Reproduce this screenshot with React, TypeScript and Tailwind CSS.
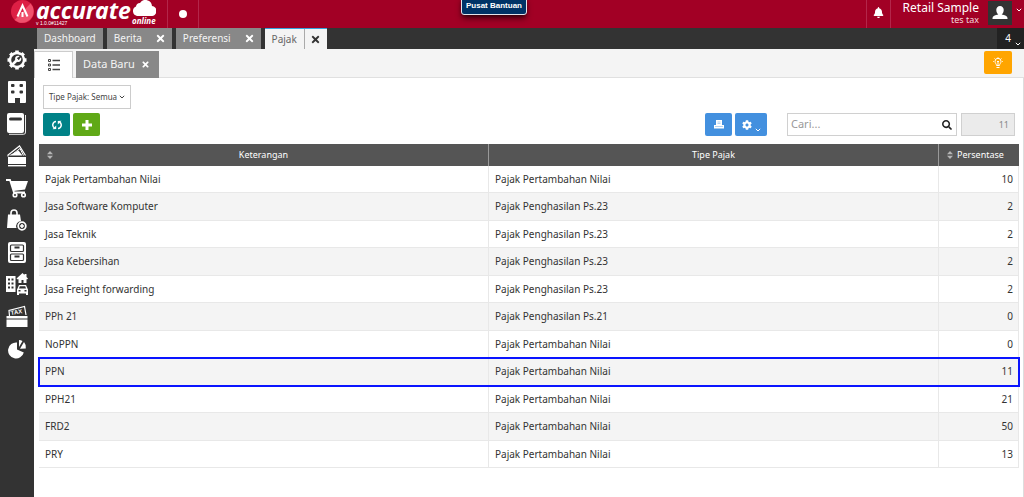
import React from 'react';
import { clsx } from 'clsx';
import { FaBell, FaCog, FaPlus, FaSearch, FaTimes } from 'react-icons/fa';

interface TaxRow {
  name: string;
  type: string;
  rate: number;
  highlighted?: boolean;
}

const TAXES: TaxRow[] = [
  { name: 'Pajak Pertambahan Nilai', type: 'Pajak Pertambahan Nilai', rate: 10 },
  { name: 'Jasa Software Komputer', type: 'Pajak Penghasilan Ps.23', rate: 2 },
  { name: 'Jasa Teknik', type: 'Pajak Penghasilan Ps.23', rate: 2 },
  { name: 'Jasa Kebersihan', type: 'Pajak Penghasilan Ps.23', rate: 2 },
  { name: 'Jasa Freight forwarding', type: 'Pajak Penghasilan Ps.23', rate: 2 },
  { name: 'PPh 21', type: 'Pajak Penghasilan Ps.21', rate: 0 },
  { name: 'NoPPN', type: 'Pajak Pertambahan Nilai', rate: 0 },
  { name: 'PPN', type: 'Pajak Pertambahan Nilai', rate: 11, highlighted: true },
  { name: 'PPH21', type: 'Pajak Pertambahan Nilai', rate: 21 },
  { name: 'FRD2', type: 'Pajak Pertambahan Nilai', rate: 50 },
  { name: 'PRY', type: 'Pajak Pertambahan Nilai', rate: 13 },
];

const MENU: { label: string; icon: React.ReactNode }[] = [
  {
    label: 'Pengaturan',
    icon: (
      <>
        <circle cx="11" cy="11" r="7" fill="none" stroke="currentColor" strokeWidth="2.4" />
        <path
          d="M11 1.5v3M11 17.5v3M1.5 11h3M17.5 11h3M4.3 4.3l2 2M15.7 15.7l2 2M4.3 17.7l2-2M15.7 6.3l2-2"
          stroke="currentColor"
          strokeWidth="3.6"
        />
        <path d="M7 15l4-4" stroke="currentColor" strokeWidth="2.6" strokeLinecap="round" />
        <circle cx="12.2" cy="9.8" r="2.2" fill="none" stroke="currentColor" strokeWidth="1.8" />
        <path d="M12.4 9.6l3-3" stroke="#333" strokeWidth="1.8" />
      </>
    ),
  },
  {
    label: 'Perusahaan',
    icon: (
      <path
        fill="currentColor"
        fillRule="evenodd"
        d="M3 0h16a1 1 0 0 1 1 1v20a1 1 0 0 1-1 1h-5v-5H9v5H3a1 1 0 0 1-1-1V1a1 1 0 0 1 1-1zM6 3a1 1 0 0 0-1 1v1a1 1 0 0 0 1 1h1.5a1 1 0 0 0 1-1V4a1 1 0 0 0-1-1zM14.5 3a1 1 0 0 0-1 1v1a1 1 0 0 0 1 1H16a1 1 0 0 0 1-1V4a1 1 0 0 0-1-1zM6 9.500a1 1 0 0 0-1 1v1a1 1 0 0 0 1 1h1.5a1 1 0 0 0 1-1v-1a1 1 0 0 0-1-1zM14.5 9.500a1 1 0 0 0-1 1v1a1 1 0 0 0 1 1H16a1 1 0 0 0 1-1v-1a1 1 0 0 0-1-1z"
      />
    ),
  },
  {
    label: 'Buku Besar',
    icon: (
      <>
        <path
          fill="currentColor"
          fillRule="evenodd"
          d="M3 0h13a2 2 0 0 1 2 2v16a2 2 0 0 1-2 2H3a2 2 0 0 1-2-2V2a2 2 0 0 1 2-2zM4.5 4.5a1.2 1.2 0 0 0 0 3h10a1.2 1.2 0 0 0 0-3z"
        />
        <path d="M19.5 2v17a2 2 0 0 1-2 2.300H3" fill="none" stroke="currentColor" strokeWidth=".9" />
      </>
    ),
  },
  {
    label: 'Kas & Bank',
    icon: (
      <>
        <rect x="2" y="12" width="18" height="7" fill="currentColor" />
        <path d="M2 11.5V10L13.5 1l6 9.500" fill="none" stroke="currentColor" strokeWidth="1.2" />
        <path d="M3 10.500l9.500-5 4 5z" fill="currentColor" />
        <path d="M7.5 8.500L14 3.500l3.500 7" fill="none" stroke="currentColor" />
        <rect x="2" y="20" width="18" height="1.4" fill="currentColor" />
      </>
    ),
  },
  {
    label: 'Penjualan',
    icon: (
      <>
        <path d="M0 3h4l4 12.500h11" fill="none" stroke="currentColor" strokeWidth="1.8" />
        <path fill="currentColor" d="M4.5 4H22l-3 8.500L7.5 14z" />
        <circle cx="9" cy="18" r="1.8" fill="none" stroke="currentColor" strokeWidth="1.6" />
        <circle cx="17.5" cy="18" r="1.8" fill="none" stroke="currentColor" strokeWidth="1.6" />
      </>
    ),
  },
  {
    label: 'Pembelian',
    icon: (
      <>
        <path d="M5 6V4a3 3 0 0 1 6 0v2" fill="none" stroke="currentColor" strokeWidth="1.6" />
        <path fill="currentColor" d="M2 5.500h12l1 6.500a5.200 5.200 0 0 0-4.500 7H1z" />
        <circle cx="16" cy="17" r="3.8" fill="none" stroke="currentColor" strokeWidth="1.8" />
        <path d="M16 15v4M14 17h4" stroke="currentColor" strokeWidth="1.6" />
      </>
    ),
  },
  {
    label: 'Persediaan',
    icon: (
      <>
        <rect x="2" y="1" width="18" height="21" rx="2" fill="currentColor" />
        <rect x="4.5" y="4" width="13" height="6.5" rx="1" fill="none" stroke="#333" strokeWidth="1.2" />
        <rect x="4.5" y="13" width="13" height="6.5" rx="1" fill="none" stroke="#333" strokeWidth="1.2" />
        <path d="M8.5 6.500h5M8.5 15.500h5" stroke="#333" strokeWidth="1.8" />
      </>
    ),
  },
  {
    label: 'Aset Tetap',
    icon: (
      <>
        <path
          fill="currentColor"
          fillRule="evenodd"
          d="M0 3h9.500v16H0zM2 5.500v2h2v-2zM5.500 5.500v2h2v-2zM2 9.500v2h2v-2zM5.500 9.500v2h2v-2zM2 13.500v2h2v-2zM5.500 13.500v2h2v-2z"
        />
        <path fill="currentColor" d="M10.500 5.500L16.500 0l2 2V1h2v3l1.500 1.500-.7.700H20.500V10h-3V7h-2v3h-3V6.200h-1.300z" />
        <path
          fill="currentColor"
          fillRule="evenodd"
          d="M13 12h7l1.500 3.500.5 1V22h-2v-1.500h-7V22h-2v-5.500l.5-1zM13.800 13.200l-.8 2.300h7l-.8-2.300zM12.500 17v1.500h2V17zM18.500 17v1.500h2V17z"
        />
      </>
    ),
  },
  {
    label: 'Perpajakan',
    icon: (
      <>
        <path d="M3.500 11L3 5.500l15.500-4L20 10" fill="none" stroke="currentColor" strokeWidth="1.2" />
        <text
          x="5"
          y="10"
          fontSize="6"
          fontWeight="700"
          fill="currentColor"
          transform="rotate(-9 5 10)"
          className="font-['Liberation_Sans',sans-serif]"
        >
          TAX
        </text>
        <path fill="currentColor" d="M.5 11h21v2.500H.5zM.5 14.500h21V22H.5z" />
      </>
    ),
  },
  {
    label: 'Laporan',
    icon: (
      <>
        <path fill="currentColor" d="M11 5.500v7l6.800 3A8 8 0 1 1 11 5.500z" />
        <path fill="currentColor" d="M13 3a8 8 0 0 1 3.500 1L13 10zM18 5a8 8 0 0 1 1.800 6.500l-5.800.3z" />
      </>
    ),
  },
];

function Chevron({ className }: { className?: string }) {
  return (
    <svg viewBox="0 0 6 4" className={clsx('w-1.5 h-1', className)} aria-hidden="true">
      <path d="M.8.8L3 3 5.2.8" fill="none" stroke="currentColor" />
    </svg>
  );
}

function SortIcon() {
  return (
    <svg viewBox="0 0 6 8" className="w-1.5 h-2 shrink-0 text-[#b5b5b5]" aria-hidden="true">
      <path d="M3 0l3 3.300H0zM3 8l3-3.300H0z" fill="currentColor" />
    </svg>
  );
}

function Tab({ label, closable = false }: { label: string; closable?: boolean }) {
  return (
    <div className="flex items-center h-[21px] bg-[#888] text-[#f4f4f4]">
      <button type="button" className="px-[7px] text-[10px]">
        {label}
      </button>
      {closable && (
        <button type="button" aria-label={`Tutup ${label}`} className="px-1.5 text-white">
          <FaTimes size={11} />
        </button>
      )}
    </div>
  );
}

function Header() {
  return (
    <header className="relative flex h-7 bg-[#a20025] text-white">
      <div className="flex w-[168px] pl-[11px] border-r border-[#b3264a]">
        <svg viewBox="0 0 23 23" className="w-[23px] h-[23px] shrink-0" aria-hidden="true">
          <circle cx="11.5" cy="11.5" r="11.5" fill="#dd1f45" />
          <path d="M3.500 20L19.500 3.500A11.500 11.500 0 0 1 8 22.400z" fill="#f0506d" />
          <path d="M6.500 16.500L11.500 5.500L16.500 16.500M11.500 12v5" fill="none" stroke="#fff" strokeWidth="2" />
        </svg>
        <div className="flex flex-col pl-0.5">
          <span className="text-[23px] leading-5 font-bold italic">accurate</span>
          <span className="font-['Liberation_Sans',sans-serif] text-[5px] leading-[7px]">v 1.0.0#11427</span>
        </div>
        <div className="flex flex-col items-center pl-px">
          <svg viewBox="0 0 24 16" className="w-6 h-4" aria-hidden="true">
            <path d="M5 16a5 5 0 0 1-1-9.500A4 4 0 0 1 8 3a6.500 6.500 0 0 1 12 3 5 5 0 0 1-1 10z" fill="currentColor" />
          </svg>
          <span className="text-[8px] leading-[9px] font-bold italic">online</span>
        </div>
      </div>
      <div className="flex w-[31px] items-center justify-center border-r border-[#b3264a]">
        <span className="w-2 h-2 rounded-full bg-white" />
      </div>

      <button
        type="button"
        className="absolute left-[461px] -top-1 h-[19px] w-[66px] rounded-[3px] border border-[#e4e4ea] bg-[#003366] font-['Liberation_Sans',sans-serif] text-[8px] leading-[17px] font-bold shadow-md shadow-black/60"
      >
        Pusat Bantuan
      </button>

      <div className="ml-auto flex">
        <button
          type="button"
          aria-label="Notifikasi"
          className="flex w-[25px] items-center justify-center border-x border-[#b3264a] pb-1"
        >
          <FaBell size={11} />
        </button>
        <div className="flex w-[88px] flex-col items-end pt-px whitespace-nowrap">
          <span className="text-xs leading-[14px]">Retail Sample</span>
          <span className="text-[9px] leading-[9px] text-[#f3d8de]">tes tax</span>
        </div>
        <button type="button" aria-label="Akun" className="flex pt-px pl-[9px] pr-0.5">
          <span className="flex h-6 w-6 items-center justify-center bg-[#333]">
            <svg viewBox="0 0 16 14" className="w-4 h-3.5" aria-hidden="true">
              <path
                d="M8 0a3.700 3.700 0 0 1 3.700 4c0 2-1 3.700-2 4.500C13 9 15.500 10 15.500 12v1H.5v-1c0-2 2.500-3 5.800-3.500-1-.8-2-2.500-2-4.500A3.700 3.700 0 0 1 8 0z"
                fill="currentColor"
              />
            </svg>
          </span>
          <Chevron className="ml-1 mt-[7px]" />
        </button>
      </div>
    </header>
  );
}

function Sidebar() {
  return (
    <nav className="flex w-[34px] shrink-0 flex-col bg-[#333] pt-4 text-white">
      {MENU.map((item) => (
        <button
          key={item.label}
          type="button"
          aria-label={item.label}
          className="flex h-8 w-full items-center justify-center"
        >
          <svg viewBox="0 0 22 22" className="w-[22px] h-[22px]" aria-hidden="true">
            {item.icon}
          </svg>
        </button>
      ))}
    </nav>
  );
}

function TabBar() {
  return (
    <div className="flex h-[21px] bg-[#333]">
      <div className="flex gap-1 pl-[3px]">
        <Tab label="Dashboard" />
        <Tab label="Berita" closable />
        <Tab label="Preferensi" closable />
        <div className="flex h-[21px] border-t border-[#35a3dc] bg-[#f4f4f4]">
          <button type="button" className="w-10 border-r border-[#aaa] text-[10px] text-[#666]">
            Pajak
          </button>
          <button type="button" aria-label="Tutup Pajak" className="flex w-[22px] items-center justify-center text-[#333]">
            <FaTimes size={11} />
          </button>
        </div>
      </div>
      <button
        type="button"
        aria-label="Daftar tab"
        className="ml-auto flex w-[27px] items-center justify-end gap-1 bg-[#222] pr-[3px] text-[10px] text-white"
      >
        4
        <Chevron className="mt-[10px]" />
      </button>
    </div>
  );
}

function SubTabBar() {
  return (
    <div className="flex h-[29px] border-b border-[#e0e0e0] bg-[#f4f4f4] pt-0.5">
      <button
        type="button"
        aria-label="Daftar Pajak"
        className="flex h-[27px] w-[39px] items-center justify-center border-x border-t border-[#ccc] bg-white text-[#444]"
      >
        <svg viewBox="0 0 12 12" className="w-3 h-3" aria-hidden="true">
          <path d="M.5.500h2v2h-2zM.5 5h2v2h-2zM.5 9.500h2v2h-2z" fill="none" stroke="currentColor" />
          <path d="M4.500 1.500H12M4.500 6H12M4.500 10.500H12" stroke="currentColor" strokeWidth="1.5" />
        </svg>
      </button>
      <div className="ml-[3px] flex h-[27px] items-center gap-1.5 bg-[#888] px-[7px] text-[#f4f4f4]">
        <button type="button" className="text-[11px]">
          Data Baru
        </button>
        <button type="button" aria-label="Tutup Data Baru" className="pr-0.5 text-white">
          <FaTimes size={9} />
        </button>
      </div>
      <button
        type="button"
        aria-label="Tips"
        className="ml-auto mr-3 flex h-[23px] w-7 items-center justify-center rounded-[2px] bg-[#ffa500] text-white"
      >
        <svg viewBox="0 0 10 12" className="w-2.5 h-3" fill="none" stroke="currentColor" aria-hidden="true">
          <path d="M3.500 8.500C3.500 7 2 6.300 2 4.300a3 3 0 0 1 6 0c0 2-1.500 2.700-1.500 4.200zM3.500 10.500h3M5 8V5M4 4l1 1 1-1" />
          <path d="M5 0v1M0 4.500h1M9 4.500h1M1 1l.7.7M9 1l-.7.7" strokeWidth=".7" />
        </svg>
      </button>
    </div>
  );
}

function Toolbar() {
  return (
    <div className="flex items-center pl-1 pr-1">
      <button
        type="button"
        aria-label="Muat ulang"
        className="mr-[3px] flex h-[23px] w-[27px] items-center justify-center rounded-[2px] bg-[#008287] text-white"
      >
        <svg viewBox="0 0 10 10" className="w-2.5 h-2.5" aria-hidden="true">
          <path d="M4 1.500A3.500 3.500 0 0 0 2.500 8M6 8.500A3.500 3.500 0 0 0 7.500 2" fill="none" stroke="currentColor" strokeWidth="1.5" />
          <path d="M.5 9.200L4.200 9V5.600zM9.500.8L5.800 1v3.400z" fill="currentColor" />
        </svg>
      </button>
      <button
        type="button"
        aria-label="Tambah"
        className="flex h-[23px] w-[27px] items-center justify-center rounded-[2px] bg-[#60a917] text-white"
      >
        <svg viewBox="0 0 10 10" className="w-2.5 h-2.5" aria-hidden="true">
          <path d="M5 0v10M0 5h10" stroke="currentColor" strokeWidth="3" />
        </svg>
      </button>

      <button
        type="button"
        aria-label="Cetak"
        className="ml-auto mr-[3px] flex h-[23px] w-[27px] items-center justify-center rounded-[2px] bg-[#4390df] text-white"
      >
        <svg viewBox="0 0 10 9" className="w-2.5 h-[9px]" aria-hidden="true">
          <path d="M2 0h6v5h2v3.500H0V5h2z" fill="currentColor" />
          <path d="M3.500 2h3M3.500 3.500h3M1 6.500h8" stroke="#4390df" strokeWidth=".4" />
        </svg>
      </button>
      <button
        type="button"
        aria-label="Pengaturan"
        className="mr-5 flex h-[23px] w-8 items-center justify-center gap-[3px] rounded-[2px] bg-[#4390df] text-white"
      >
        <FaCog size={10} />
        <Chevron className="mt-[11px]" />
      </button>

      <label className="mr-1 flex h-[23px] w-[170px] items-center border border-[#d0d0d0] bg-white pl-[3px] pr-1">
        <input
          type="text"
          aria-label="Cari"
          placeholder="Cari..."
          className="min-w-0 flex-1 text-[11px] outline-none placeholder:text-[#999]"
        />
        <FaSearch size={10} className="text-[#222]" />
      </label>
      <input
        type="text"
        aria-label="Jumlah data"
        value="11"
        readOnly
        className="h-[23px] w-[54px] border border-[#d0d0d0] bg-[#ebebeb] pr-[5px] text-right text-[9px] text-[#888] outline-none"
      />
    </div>
  );
}

function TaxTable() {
  return (
    <table className="mt-2 w-full table-fixed border-separate border-spacing-0 text-[10px] text-[#333]">
      <colgroup>
        <col />
        <col />
        <col className="w-20" />
      </colgroup>
      <thead>
        <tr className="h-[22px] bg-[#555] text-[9px] text-white">
          <th className="border-r border-[#999] pl-2 pr-3.5 font-normal">
            <span className="flex items-center">
              <SortIcon />
              <span className="flex-1">Keterangan</span>
            </span>
          </th>
          <th className="border-r border-[#999] font-normal">Tipe Pajak</th>
          <th className="px-2 font-normal">
            <span className="flex items-center gap-1">
              <SortIcon />
              Persentase
            </span>
          </th>
        </tr>
      </thead>
      <tbody>
        {TAXES.map((row) => (
          <tr
            key={row.name}
            className={clsx(
              'odd:h-[27px] even:h-7 even:bg-[#f4f4f4]',
              row.highlighted && 'outline-2 -outline-offset-1 outline-[#0a14ff]',
            )}
          >
            <td className="border-r border-b border-[#e8e8e8] pl-1.5 py-0">{row.name}</td>
            <td className="border-r border-b border-[#e8e8e8] pl-1.5 py-0">{row.type}</td>
            <td className="border-r border-b border-[#e8e8e8] pr-[5px] py-0 text-right">{row.rate}</td>
          </tr>
        ))}
      </tbody>
    </table>
  );
}

export default function App() {
  return (
    <div className="flex min-h-screen flex-col bg-white font-['Noto_Sans',sans-serif]">
      <Header />
      <div className="flex flex-1">
        <Sidebar />
        <div className="flex min-w-0 flex-1 flex-col">
          <TabBar />
          <SubTabBar />
          <main className="flex-1 border-r border-[#ddd] pt-[7px] pl-[5px] pr-1">
            <button
              type="button"
              className="mb-1 ml-1 flex h-6 w-[88px] items-center justify-center gap-0.5 border border-[#ccc] bg-white text-[8px] whitespace-nowrap text-[#444]"
            >
              Tipe Pajak: Semua
              <Chevron />
            </button>
            <Toolbar />
            <TaxTable />
          </main>
        </div>
      </div>
    </div>
  );
}
